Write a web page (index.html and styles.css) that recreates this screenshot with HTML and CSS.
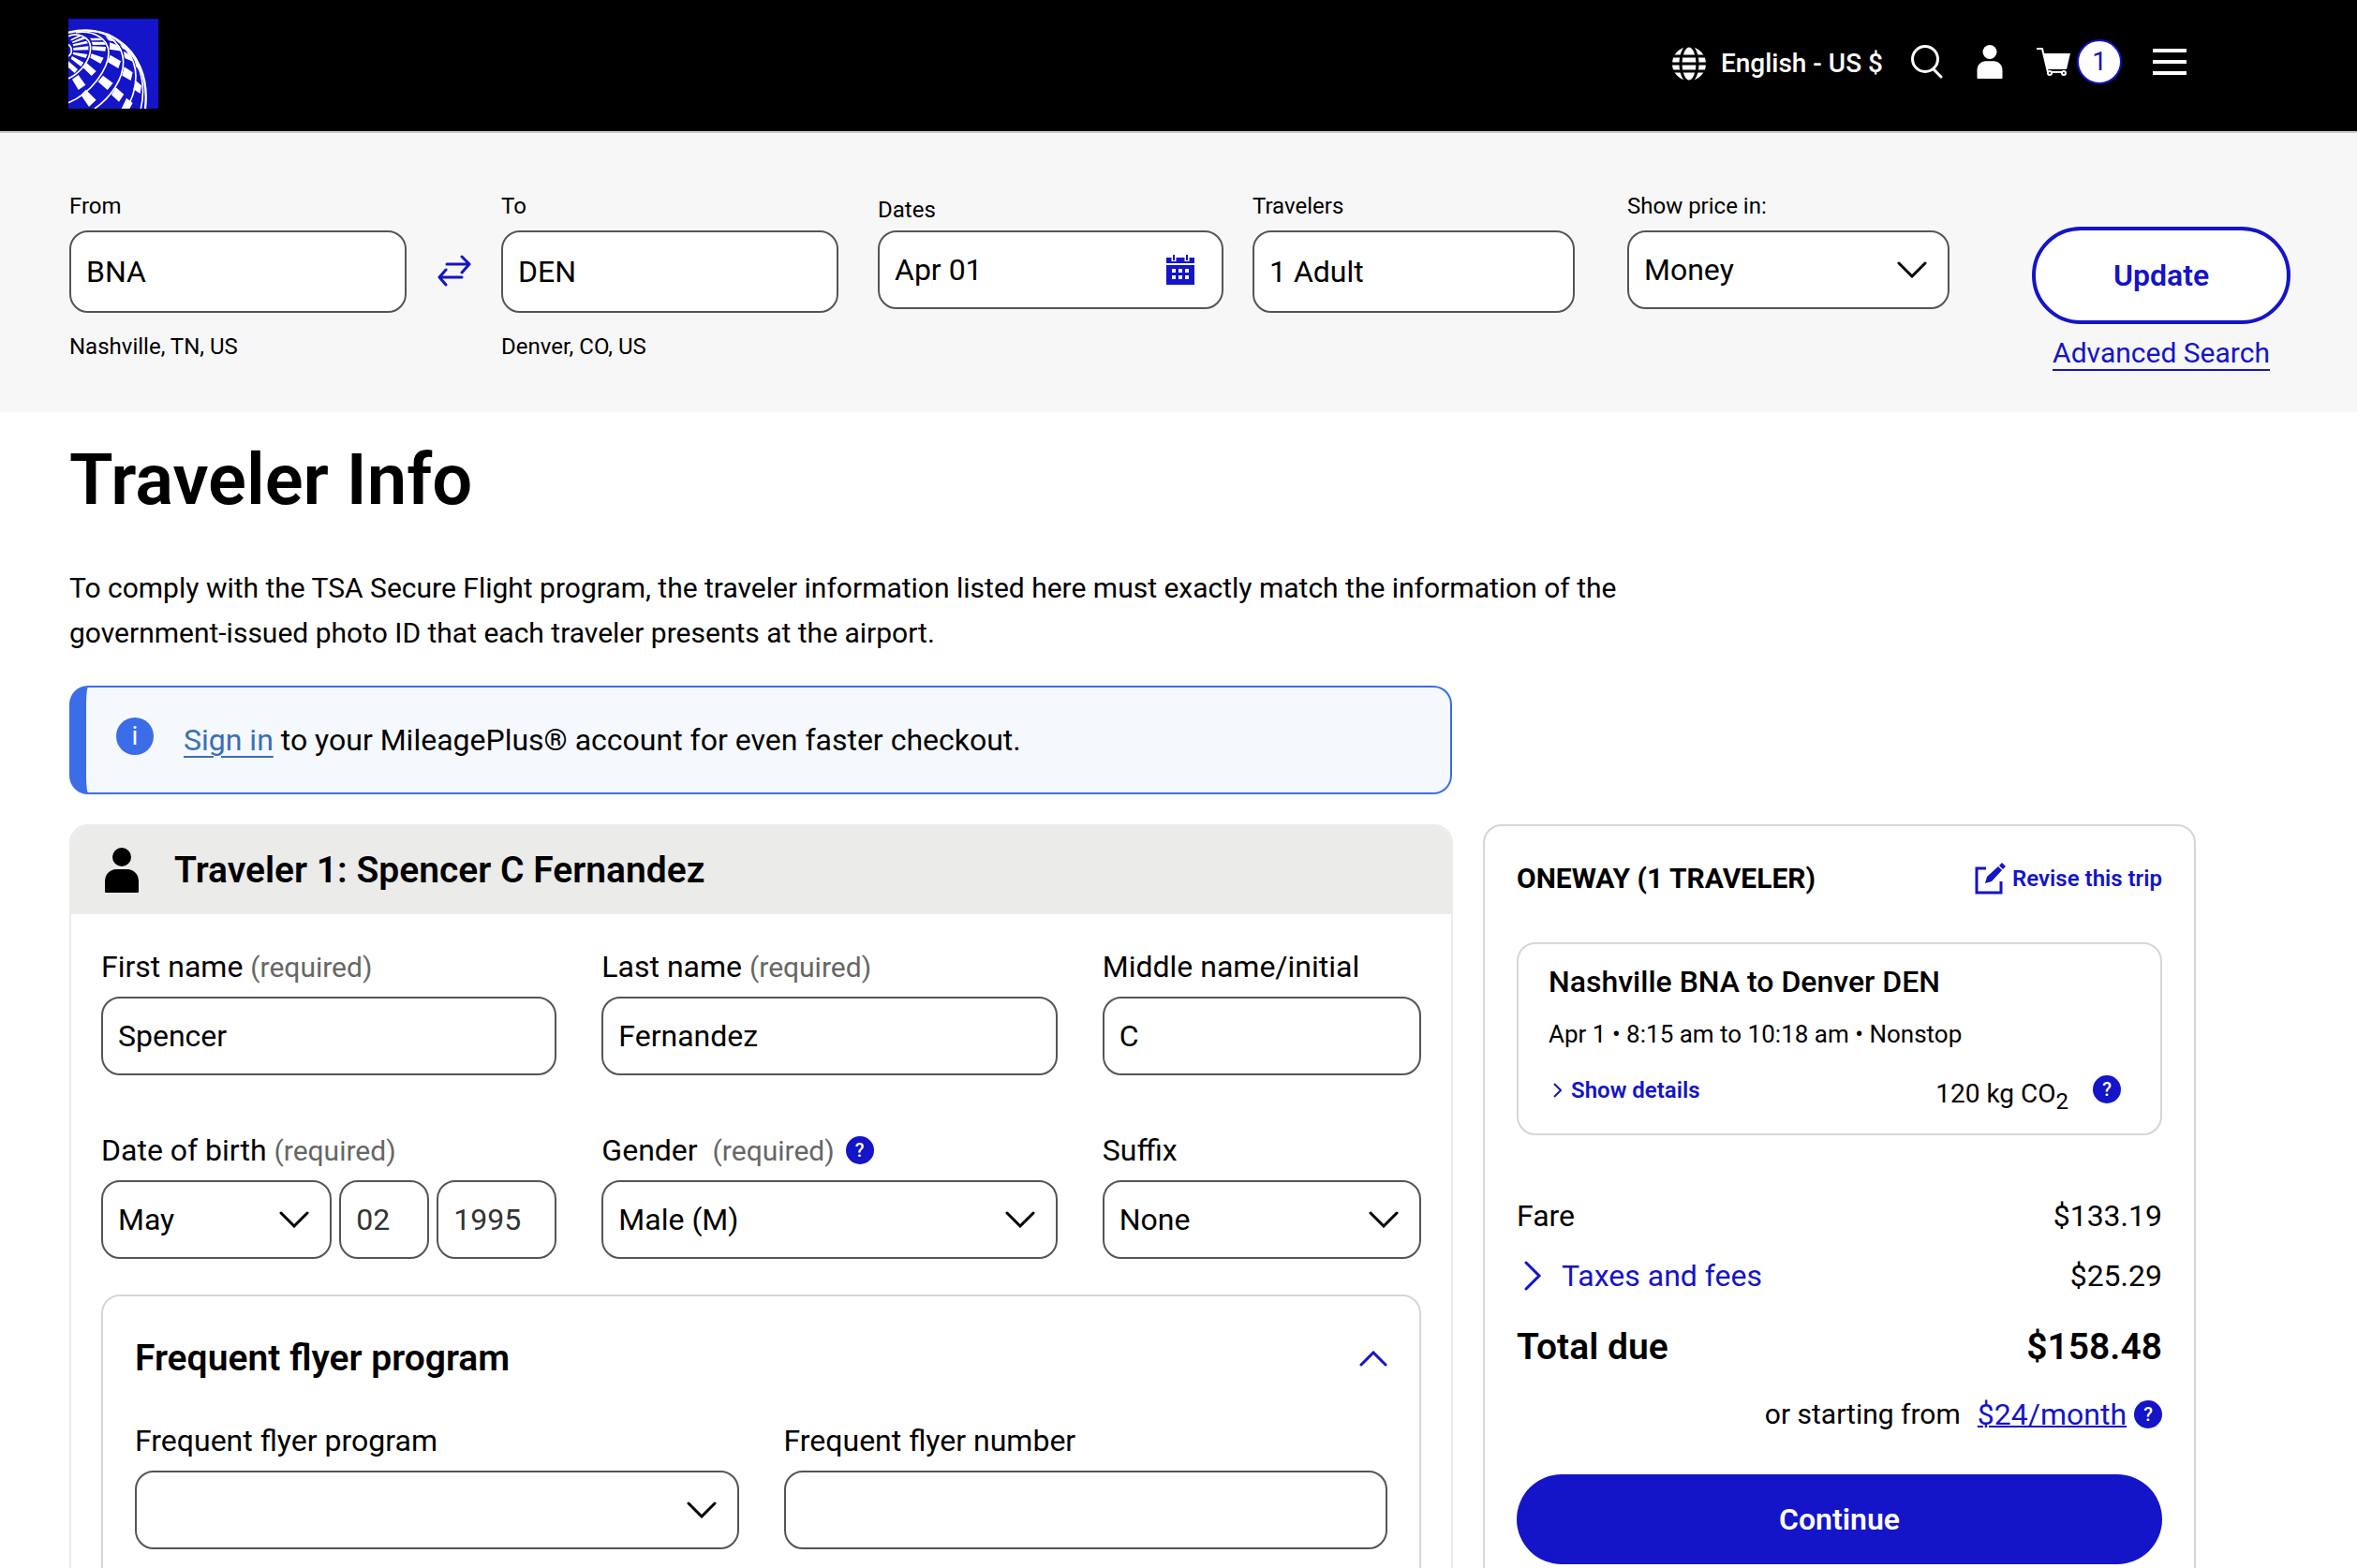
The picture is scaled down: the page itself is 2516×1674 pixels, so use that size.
FILE: index.html
```html
<!DOCTYPE html>
<html lang="en">
<head>
    <meta charset="UTF-8">
    <meta name="viewport" content="width=device-width, initial-scale=1.0">
    <title>Traveler Info</title>
    <link rel="stylesheet" href="styles.css">
</head>
<body>
    <!-- Shared icons -->
    <svg class="sprite" aria-hidden="true">
        <symbol id="chevron" viewBox="0 0 32 18">
            <path d="M2 2l14 14L30 2" fill="none" stroke="currentColor" stroke-width="3" stroke-linecap="round"/>
        </symbol>
        <symbol id="person" viewBox="0 0 36 48">
            <circle cx="18" cy="10" r="10"/>
            <path d="M0 47V36C0 28 6 23 12 23h12c6 0 12 5 12 13v11q0 1-1 1H1q-1 0-1-1z"/>
        </symbol>
    </svg>

    <header class="top-bar">
        <a class="logo" href="#" aria-label="Home">
            <svg width="96" height="96" viewBox="6 6 288 288">
                <rect x="6" y="6" width="288" height="288" fill="#1414c8"/>
                <!-- globe lines -->
                <g fill="none" stroke="#fff" stroke-width="5">
                    <path d="M6 88Q16 95 16 108T6 126"/>
                    <path d="M6 62C30 50 77 60 77 100C77 140 45 178 6 198"/>
                    <path d="M30 50C95 42 135 75 135 115C135 165 80 245 6 275"/>
                    <path d="M80 45C140 50 182 95 182 145C182 200 140 260 90 294"/>
                    <path d="M110 50C175 65 222 130 222 190C222 235 208 265 192 294"/>
                    <path d="M165 78C215 110 262 190 238 294"/>
                    <path d="M4 51C60 36 120 43 165 75C225 115 264 190 252 294" stroke-width="7"/>
                </g>
                <!-- globe blocks -->
                <path fill="#fff" d="M22 99L70 94V106L22 107zM22 113L67 120L62 132L20 120zM18 126L55 146L46 159L14 134zM6 142L36 168L26 180L6 162zM20 88L64 77L69 85L22 94zM17 80L55 64L62 70L20 84zM12 73L42 58L50 61L16 76z
                    M82 94L126 96L124 110L82 106zM80 118L119 131L109 150L76 131zM64 147L95 174L80 189L50 160zM38 186L61 218L38 234L18 200zM80 80L120 80L126 89L84 90zM75 68L106 68L115 75L80 76z
                    M138 82L168 92L178 110L138 104zM140 122L174 142L166 165L132 145zM117 188L149 212L131 234L101 208zM62 233L95 266L72 288L46 250zM125 62L145 68L160 80L135 76z
                    M183 110L206 124L214 144L186 132zM185 160L212 178L206 204L178 188zM158 226L184 248L168 272L144 250zM170 88L188 98L198 110L180 102z
                    M218 134L232 152L238 176L222 158zM222 204L240 220L236 246L214 232zM192 260L212 276L202 294H176z"/>
            </svg>
        </a>
        <nav class="top-nav">
            <button class="language" type="button">
                <svg width="36" height="36" viewBox="0 0 36 36">
                    <circle cx="18" cy="18" r="18" fill="#fff"/>
                    <g fill="none" stroke="#000" stroke-width="3">
                        <ellipse cx="18" cy="18" rx="9" ry="19"/>
                        <path d="M0 10h36M0 18h36M0 26h36"/>
                    </g>
                </svg>
                <span>English - US $</span>
            </button>
            <button class="nav-icon search" type="button" aria-label="Search">
                <svg width="34" height="36" viewBox="0 0 34 36" fill="none" stroke="#fff" stroke-width="3" stroke-linecap="round">
                    <circle cx="15" cy="15" r="13.5"/>
                    <path d="M24 26l8 8"/>
                </svg>
            </button>
            <button class="nav-icon account" type="button" aria-label="Account">
                <svg width="28" height="36" fill="#fff"><use href="#person"/></svg>
            </button>
            <button class="nav-icon cart" type="button" aria-label="Cart">
                <svg width="36" height="32" viewBox="0 0 36 32">
                    <path d="M7 7h29l-4 17H11z" fill="#fff"/>
                    <path d="M0 2h6l6 25h18" fill="none" stroke="#fff" stroke-width="2"/>
                    <g fill="#000" stroke="#fff" stroke-width="2">
                        <circle cx="14" cy="28" r="2"/>
                        <circle cx="29" cy="28" r="2"/>
                    </g>
                </svg>
                <span class="cart-count">1</span>
            </button>
            <button class="nav-icon menu" type="button" aria-label="Menu">
                <svg width="36" height="28" viewBox="0 0 36 28" fill="#fff">
                    <path d="M0 0h36v4H0zM0 12h36v4H0zM0 24h36v4H0z"/>
                </svg>
            </button>
        </nav>
    </header>

    <!-- Flight search -->
    <form class="search-bar">
        <div class="search-field airport">
            <label for="from">From</label>
            <input type="text" id="from" class="tall" value="BNA">
            <p class="hint">Nashville, TN, US</p>
        </div>
        <button class="swap" type="button" aria-label="Swap airports">
            <svg width="36" height="34" viewBox="0 0 36 34" fill="none" stroke="currentColor" stroke-width="3" stroke-linecap="round" stroke-linejoin="round">
                <path d="M10 10h24M26 2l8 8-8 9M26 24H2M9 16l-7 8 7 8"/>
            </svg>
        </button>
        <div class="search-field airport">
            <label for="to">To</label>
            <input type="text" id="to" class="tall" value="DEN">
            <p class="hint">Denver, CO, US</p>
        </div>
        <div class="search-field dates">
            <label for="dates">Dates</label>
            <div class="with-icon">
                <input type="text" id="dates" value="Apr 01">
                <button class="calendar" type="button" aria-label="Open calendar">
                    <svg width="32" height="32" viewBox="0 0 32 32">
                        <path d="M1 3h30v6H1zM1 11h30v21H1z" fill="#1414c8"/>
                        <path d="M9 0v7M23 0v7" stroke="#fff" stroke-width="5"/>
                        <path d="M9 0v6M23 0v6" stroke="#1414c8" stroke-width="2"/>
                        <path d="M7 15h4v4H7zM14 15h4v4h-4zM21 15h4v4h-4zM7 22h4v4H7zM14 22h4v4h-4zM21 22h4v4h-4z" fill="#fff"/>
                    </svg>
                </button>
            </div>
        </div>
        <div class="search-field travelers">
            <label for="travelers">Travelers</label>
            <button type="button" id="travelers" class="box tall">1 Adult</button>
        </div>
        <div class="search-field price">
            <label for="price">Show price in:</label>
            <div class="with-icon">
                <select id="price">
                    <option>Money</option>
                    <option>Miles</option>
                </select>
                <svg class="arrow"><use href="#chevron"/></svg>
            </div>
        </div>
        <div class="search-actions">
            <button class="update" type="submit">Update</button>
            <a href="#">Advanced Search</a>
        </div>
    </form>

    <main>
        <h1>Traveler Info</h1>
        <p class="intro">To comply with the TSA Secure Flight program, the traveler information listed here must exactly match the information of the government-issued photo ID that each traveler presents at the airport.</p>

        <div class="sign-in">
            <span class="info-icon">i</span>
            <p><a href="#">Sign in</a> to your MileagePlus® account for even faster checkout.</p>
        </div>

        <div class="columns">
            <section class="traveler">
                <div class="traveler-head">
                    <svg width="36" height="48"><use href="#person"/></svg>
                    <h2>Traveler 1: Spencer C Fernandez</h2>
                </div>
                <form class="traveler-form">
                    <div class="field-grid">
                        <div>
                            <label for="first">First name <span class="required">(required)</span></label>
                            <input type="text" id="first" value="Spencer">
                        </div>
                        <div>
                            <label for="last">Last name <span class="required">(required)</span></label>
                            <input type="text" id="last" value="Fernandez">
                        </div>
                        <div>
                            <label for="middle">Middle name/initial</label>
                            <input type="text" id="middle" value="C">
                        </div>
                        <div>
                            <label for="month">Date of birth <span class="required">(required)</span></label>
                            <div class="birth">
                                <div class="with-icon">
                                    <select id="month">
                                        <option>May</option>
                                    </select>
                                    <svg class="arrow"><use href="#chevron"/></svg>
                                </div>
                                <input type="text" value="02" aria-label="Day">
                                <input type="text" value="1995" aria-label="Year">
                            </div>
                        </div>
                        <div>
                            <div class="label-row">
                                <label for="gender">Gender <span class="required">(required)</span></label>
                                <button class="help" type="button" aria-label="About gender">?</button>
                            </div>
                            <div class="with-icon">
                                <select id="gender">
                                    <option>Male (M)</option>
                                    <option>Female (F)</option>
                                </select>
                                <svg class="arrow"><use href="#chevron"/></svg>
                            </div>
                        </div>
                        <div>
                            <label for="suffix">Suffix</label>
                            <div class="with-icon">
                                <select id="suffix">
                                    <option>None</option>
                                </select>
                                <svg class="arrow"><use href="#chevron"/></svg>
                            </div>
                        </div>
                    </div>

                    <div class="frequent-flyer">
                        <div class="flyer-head">
                            <h2>Frequent flyer program</h2>
                            <button type="button" aria-label="Collapse">
                                <svg width="30" height="17" viewBox="0 0 30 17"><path d="M2 15L15 2l13 13" fill="none" stroke="currentColor" stroke-width="3" stroke-linecap="round"/></svg>
                            </button>
                        </div>
                        <div class="flyer-fields">
                            <div>
                                <label for="program">Frequent flyer program</label>
                                <div class="with-icon">
                                    <select id="program">
                                        <option></option>
                                    </select>
                                    <svg class="arrow"><use href="#chevron"/></svg>
                                </div>
                            </div>
                            <div>
                                <label for="number">Frequent flyer number</label>
                                <input type="text" id="number">
                            </div>
                        </div>
                    </div>
                </form>
            </section>

            <!-- Trip summary -->
            <aside class="summary">
                <div class="summary-head">
                    <h3>ONEWAY (1 TRAVELER)</h3>
                    <a href="#">
                        <svg width="34" height="34" viewBox="0 0 34 34">
                            <path d="M12 6H2v26h26V20" fill="none" stroke="currentColor" stroke-width="3"/>
                            <path d="M11 22l2-7L25 4l4 4-11 12zM26 3l3-3 4 4-3 3z" fill="currentColor"/>
                        </svg>
                        Revise this trip
                    </a>
                </div>
                <div class="flight">
                    <h4>Nashville BNA to Denver DEN</h4>
                    <p>Apr 1 • 8:15 am to 10:18 am • Nonstop</p>
                    <div class="flight-foot">
                        <button class="details" type="button">
                            <svg width="10" height="16" viewBox="0 0 10 16"><path d="M2 1l7 7-7 7" fill="none" stroke="currentColor" stroke-width="2"/></svg>
                            Show details
                        </button>
                        <span class="co2">120 kg CO<sub>2</sub></span>
                        <button class="help" type="button" aria-label="About emissions">?</button>
                    </div>
                </div>
                <dl class="prices">
                    <div>
                        <dt>Fare</dt>
                        <dd>$133.19</dd>
                    </div>
                    <div>
                        <dt>
                            <button class="taxes" type="button">
                                <svg width="20" height="32" viewBox="0 0 20 32"><path d="M2 2l14 14L2 30" fill="none" stroke="currentColor" stroke-width="3" stroke-linecap="round"/></svg>
                                Taxes and fees
                            </button>
                        </dt>
                        <dd>$25.29</dd>
                    </div>
                    <div class="total">
                        <dt>Total due</dt>
                        <dd>$158.48</dd>
                    </div>
                </dl>
                <div class="monthly">
                    <span>or starting from</span>
                    <a href="#">$24/month</a>
                    <button class="help" type="button" aria-label="About monthly payments">?</button>
                </div>
                <button class="continue" type="button">Continue</button>
            </aside>
        </div>
    </main>
</body>
</html>
```
FILE: styles.css
```css
* {
    box-sizing: border-box;
}
body {
    font-family: Roboto, "Liberation Sans", sans-serif;
    font-size: 32px;
    line-height: 40px;
    color: #000;
    background-color: #fff;
    margin: 0;
    height: 100vh;
    overflow: hidden;
}
h1, h2, h3, h4, p, dl, dd {
    margin: 0;
}
svg {
    display: block;
    flex: none;
}
a {
    color: #1414c8;
}
button {
    font: inherit;
    color: #1414c8;
    background: none;
    border: none;
    padding: 0;
    cursor: pointer;
}
input, select, .box {
    display: block;
    width: 100%;
    height: 84px;
    font: inherit;
    color: #000;
    background-color: #fff;
    border: 2px solid #555;
    border-radius: 20px;
    padding: 0 16px;
    appearance: none;
    text-align: left;
}
label {
    display: block;
    margin-bottom: 12px;
}
.tall {
    height: 88px;
}
.sprite {
    display: none;
}
.with-icon {
    position: relative;
}
.arrow {
    position: absolute;
    right: 24px;
    top: 33px;
    width: 32px;
    height: 18px;
    pointer-events: none;
}
.help {
    width: 30px;
    height: 30px;
    border-radius: 50%;
    background-color: #1414c8;
    color: #fff;
    font-size: 20px;
    font-weight: 500;
    line-height: 30px;
    text-align: center;
    flex: none;
}

/* Header */
.top-bar {
    display: flex;
    justify-content: space-between;
    align-items: flex-start;
    height: 142px;
    padding: 20px 182px 0 73px;
    background-color: #000;
    border-bottom: 2px solid #ccc;
}
.top-nav {
    display: flex;
    align-items: center;
    height: 96px;
    color: #fff;
}
.top-nav button {
    display: flex;
    align-items: center;
    height: 48px;
}
.top-nav .nav-icon {
    margin-bottom: 4px;
}
.language {
    gap: 16px;
    color: #fff;
    font-size: 28px;
    font-weight: 500;
}
.search {
    margin-left: 30px;
}
.account {
    margin-left: 36px;
}
.cart {
    margin-left: 36px;
    gap: 7px;
}
.menu {
    margin-left: 33px;
}
.cart-count {
    width: 48px;
    height: 48px;
    border: 2px solid #1414c8;
    border-radius: 50%;
    background-color: #fff;
    color: #1414c8;
    font-size: 28px;
    line-height: 44px;
    text-align: center;
}

/* Search bar */
.search-bar {
    display: flex;
    align-items: flex-start;
    padding: 62px 71px 44px 74px;
    background-color: #f7f7f7;
}
.search-field label {
    font-size: 24px;
    line-height: 32px;
    margin-bottom: 10px;
}
.airport {
    flex: 360 1 0;
}
.dates {
    flex: 369 1 0;
    margin-left: 42px;
}
.dates label {
    margin: 4px 0 6px;
}
.travelers {
    flex: 344 1 0;
    margin-left: 31px;
}
.price {
    flex: 344 1 0;
    margin-left: 56px;
}
.hint {
    font-size: 24px;
    line-height: 32px;
    margin-top: 20px;
}
.swap {
    display: flex;
    justify-content: center;
    width: 101px;
    margin-top: 68px;
}
.calendar {
    position: absolute;
    right: 30px;
    top: 26px;
}
.search-actions {
    display: flex;
    flex-direction: column;
    align-items: center;
    flex: 276 1 0;
    margin: 38px 0 0 88px;
}
.search-actions a {
    font-size: 30px;
    line-height: 34px;
    margin-top: 14px;
    text-decoration: none;
    border-bottom: 2px solid;
}
.update {
    width: 100%;
    height: 104px;
    border: 4px solid #1414c8;
    border-radius: 52px;
    background-color: #fff;
    font-weight: 600;
}

/* Main */
main {
    padding: 24px 172px 0 74px;
}
h1 {
    font-size: 76px;
    font-weight: 600;
    line-height: 96px;
}
h2 {
    font-size: 39px;
    font-weight: 600;
    line-height: 48px;
}
.intro {
    max-width: 76%;
    font-size: 30px;
    line-height: 48px;
    margin: 44px 0 32px;
}
.sign-in {
    display: flex;
    align-items: center;
    width: 65%;
    height: 116px;
    margin-bottom: 32px;
    padding-left: 32px;
    border: 2px solid #3b6de8;
    border-left-width: 18px;
    border-radius: 20px;
    background-color: #f5f8fd;
}
.sign-in a {
    color: #3a6fb5;
    text-underline-offset: 6px;
    text-decoration-thickness: 2px;
}
.info-icon {
    width: 40px;
    height: 40px;
    margin: 0 32px 8px 0;
    border-radius: 50%;
    background-color: #3b6de8;
    color: #fff;
    font-size: 28px;
    text-align: center;
}
.columns {
    display: grid;
    grid-template-columns: 1477fr 761fr;
    column-gap: 32px;
}

/* Traveler card */
.traveler {
    border: 2px solid #ebebea;
    border-radius: 20px;
    overflow: hidden;
}
.traveler-head {
    display: flex;
    align-items: center;
    gap: 38px;
    height: 94px;
    padding: 0 36px;
    background-color: #ebebea;
}
.traveler-form {
    padding: 36px 32px;
}
.field-grid {
    display: grid;
    grid-template-columns: 486fr 486fr 340fr;
    gap: 60px 48px;
}
.required {
    font-size: 30px;
    line-height: 1;
    color: #666;
}
.label-row {
    display: flex;
    align-items: center;
    gap: 12px;
    margin-bottom: 12px;
}
.label-row label {
    margin: 0;
}
.label-row .required {
    margin-left: 8px;
}
.birth {
    display: grid;
    grid-template-columns: 246fr 96fr 128fr;
    gap: 8px;
}
.birth input {
    color: #333;
}
.frequent-flyer {
    margin-top: 38px;
    padding: 42px 34px;
    border: 2px solid #d6d6d3;
    border-radius: 20px;
}
.flyer-head {
    display: flex;
    justify-content: space-between;
    align-items: center;
    margin-bottom: 44px;
}
.flyer-fields {
    display: grid;
    grid-template-columns: 1fr 1fr;
    gap: 48px;
}

/* Trip summary */
.summary {
    padding: 36px 34px;
    border: 2px solid #d6d6d3;
    border-radius: 20px;
}
.summary-head {
    display: flex;
    justify-content: space-between;
    align-items: center;
    margin-bottom: 48px;
}
.summary-head a {
    display: flex;
    align-items: center;
    gap: 6px;
    font-size: 24px;
    font-weight: 600;
    text-decoration: none;
}
h3 {
    font-size: 30px;
    font-weight: 700;
}
h4 {
    font-size: 32px;
    font-weight: 500;
}
.flight {
    padding: 20px 32px 22px;
    border: 2px solid #d6d6d3;
    border-radius: 20px;
}
.flight p {
    font-size: 26px;
    margin: 16px 0 24px;
}
.flight-foot {
    display: flex;
    height: 40px;
}
.flight-foot .help {
    margin: 0 10px 0 26px;
}
.details {
    display: flex;
    align-items: center;
    gap: 10px;
    height: 32px;
    padding-left: 4px;
    font-size: 24px;
    font-weight: 600;
}
.co2 {
    margin-left: auto;
    font-size: 28px;
}
.co2 sub {
    font-size: 24px;
    line-height: 0;
}
.prices {
    margin-top: 66px;
}
.prices div {
    display: flex;
    justify-content: space-between;
    margin-bottom: 24px;
}
.taxes {
    display: flex;
    align-items: center;
    gap: 20px;
    padding-left: 8px;
}
.prices .total {
    font-size: 39px;
    font-weight: 600;
    line-height: 48px;
    margin: 32px 0 28px;
}
.monthly {
    display: flex;
    justify-content: flex-end;
    align-items: center;
}
.monthly span {
    font-size: 30px;
}
.monthly a {
    margin: 0 8px 0 18px;
    text-decoration-thickness: 2px;
}
.continue {
    display: block;
    width: 100%;
    height: 96px;
    margin-top: 44px;
    border-radius: 48px;
    background-color: #1414c8;
    color: #fff;
    font-weight: 600;
}
```
